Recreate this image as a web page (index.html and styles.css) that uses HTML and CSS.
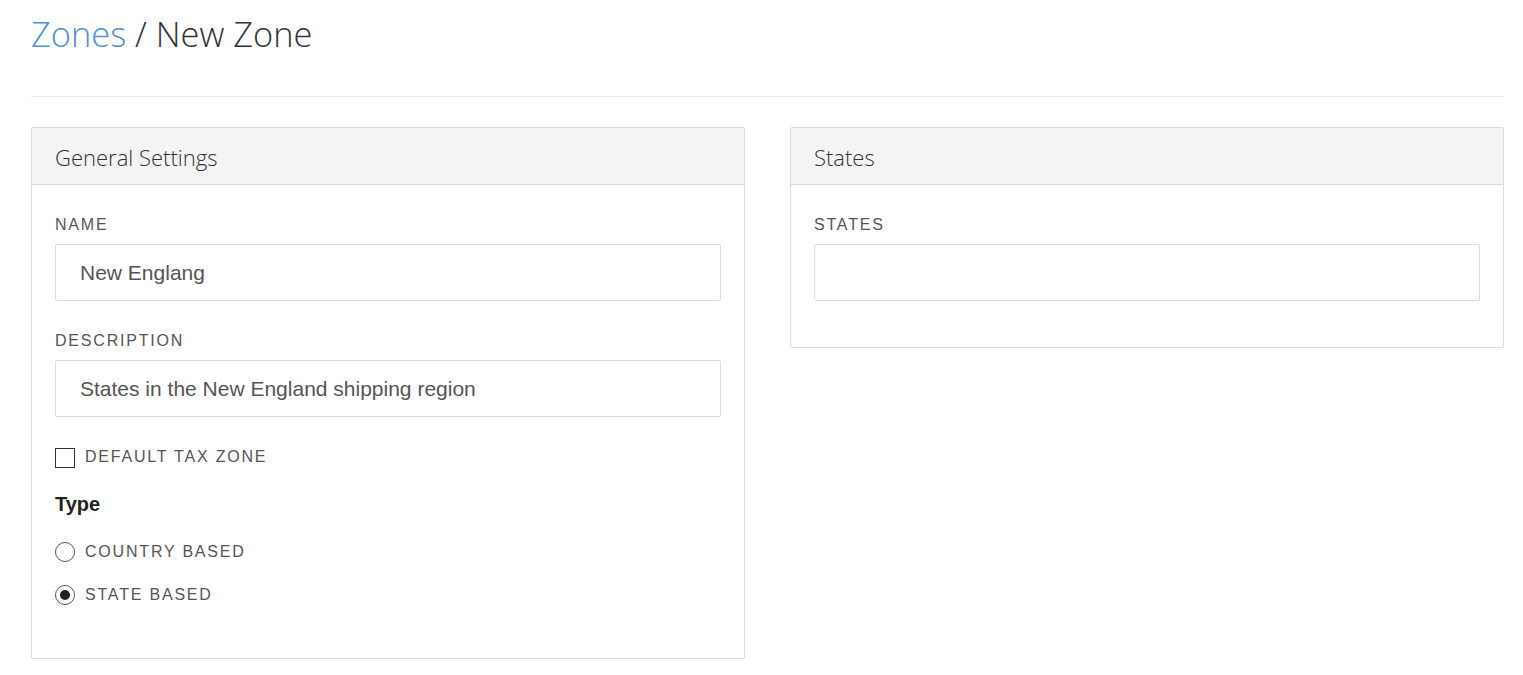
FILE: index.html
```html
<!DOCTYPE html>
<html>
<head>
<meta charset="utf-8">
<title>New Zone</title>
<link rel="stylesheet" href="styles.css">
</head>
<body>
<div class="page">
  <h1 class="title"><a class="crumb" href="#">Zones</a> / New Zone</h1>
  <hr class="divider">
  <div class="columns">
    <section class="panel">
      <header class="panel-head">General Settings</header>
      <div class="panel-body">
        <div class="field">
          <label class="label">Name</label>
          <div class="input">New Englang</div>
        </div>
        <div class="field">
          <label class="label">Description</label>
          <div class="input">States in the New England shipping region</div>
        </div>
        <div class="check-row">
          <span class="checkbox"></span>
          <span class="label">Default Tax Zone</span>
        </div>
        <div class="type-title">Type</div>
        <div class="radios">
          <div class="radio-row first">
            <span class="radio"></span>
            <span class="label">Country Based</span>
          </div>
          <div class="radio-row">
            <span class="radio checked"></span>
            <span class="label">State Based</span>
          </div>
        </div>
      </div>
    </section>
    <section class="panel">
      <header class="panel-head">States</header>
      <div class="panel-body">
        <div class="field">
          <label class="label">States</label>
          <div class="input empty"></div>
        </div>
      </div>
    </section>
  </div>
</div>
</body>
</html>
```

FILE: styles.css
```css
* { box-sizing: border-box; }
html, body { margin: 0; padding: 0; background: #fff; }
body { font-family: "Liberation Sans", Arial, sans-serif; color: #333; }

.page { padding: 0 19px 0 31px; }

.title {
  margin: 0;
  padding-top: 12px;
  height: 64px;
  font-family: "Open Sans", sans-serif;
  font-weight: 300;
  font-size: 34.4px;
  line-height: 44px;
  color: #333;
}
.crumb { color: #4f92cf; text-decoration: none; }

.divider {
  margin: 32px 0 30px;
  border: 0;
  border-top: 1px solid #ececec;
  height: 0;
}

.columns {
  display: grid;
  grid-template-columns: 1fr 1fr;
  gap: 45px;
  align-items: start;
}

.panel {
  border: 1px solid #dcdcdc;
  border-radius: 2px;
  background: #fff;
}
.panel-head {
  height: 57px;
  background: #f4f4f4;
  border-bottom: 1px solid #dcdcdc;
  padding: 0 23px;
  font-family: "Open Sans", sans-serif;
  font-weight: 300;
  font-size: 22px;
  line-height: 58px;
  color: #333;
}
.panel-body { padding: 30px 23px 16px; }

.label {
  display: block;
  font-size: 16px;
  line-height: 20px;
  letter-spacing: 1.8px;
  text-transform: uppercase;
  color: #555;
}
.field { margin-bottom: 30px; }
.field .label { margin-bottom: 9px; }

.input {
  height: 57px;
  border: 1px solid #dcdcdc;
  border-radius: 2px;
  padding: 0 24px;
  font-size: 21px;
  line-height: 55px;
  color: #555;
}

.check-row, .radio-row {
  display: flex;
  align-items: center;
  gap: 10px;
  height: 26px;
}
.check-row { margin-top: -2px; }
.check-row .label { margin-top: -2px; }
.checkbox {
  width: 20px;
  height: 20px;
  border: 1px solid #333;
  background: #fff;
}

.type-title {
  margin-top: 21px;
  font-weight: bold;
  font-size: 20px;
  line-height: 24px;
  color: #222;
}

.radios { margin-bottom: 34px; }
.radio-row.first { margin-top: 23px; }
.radio-row + .radio-row { margin-top: 17px; }
.radio {
  width: 20px;
  height: 20px;
  border: 1px solid #555;
  border-radius: 50%;
  display: flex;
  align-items: center;
  justify-content: center;
}
.radio.checked::after {
  content: "";
  width: 10px;
  height: 10px;
  border-radius: 50%;
  background: #222;
}
```
